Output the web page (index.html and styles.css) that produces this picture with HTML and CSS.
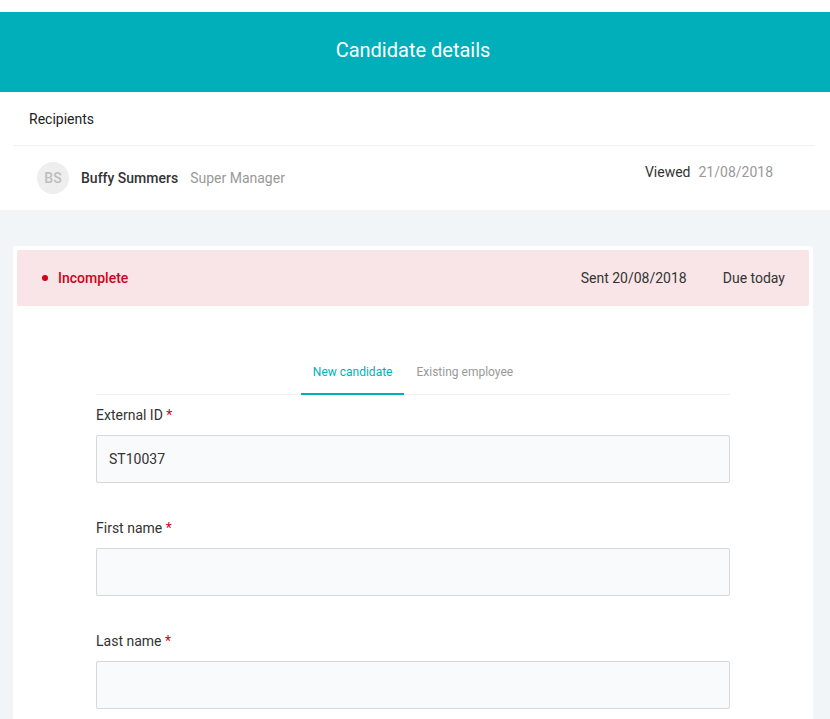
FILE: index.html
```html
<!DOCTYPE html>
<html lang="en">
<head>
    <meta charset="UTF-8">
    <title>Candidate details</title>
    <link rel="stylesheet" href="styles.css">
</head>
<body>
    <div class="top-gap"></div>
    <header class="page-header">
        <h1>Candidate details</h1>
    </header>

    <section class="recipients">
        <div class="recipients-title">Recipients</div>
        <div class="recipient-row">
            <div class="recipient-info">
                <span class="avatar">BS</span>
                <span class="recipient-name">Buffy Summers</span>
                <span class="recipient-role">Super Manager</span>
            </div>
            <div class="recipient-status">
                <span class="status-label">Viewed</span>
                <span class="status-date">21/08/2018</span>
            </div>
        </div>
    </section>

    <main class="main-area">
        <div class="card">
            <div class="status-bar">
                <div class="status-left">
                    <span class="dot"></span>
                    <span>Incomplete</span>
                </div>
                <div class="status-right">
                    <span>Sent 20/08/2018</span>
                    <span>Due today</span>
                </div>
            </div>

            <div class="form-wrap">
                <div class="tabs">
                    <button class="tab active">New candidate</button>
                    <button class="tab">Existing employee</button>
                </div>

                <div class="fields">
                    <div class="field">
                        <label>External ID <span class="req">*</span></label>
                        <input type="text" value="ST10037">
                    </div>
                    <div class="field">
                        <label>First name <span class="req">*</span></label>
                        <input type="text">
                    </div>
                    <div class="field">
                        <label>Last name <span class="req">*</span></label>
                        <input type="text">
                    </div>
                </div>
            </div>
        </div>
    </main>
</body>
</html>
```

FILE: styles.css
```css
body {
    font-family: Roboto, "Liberation Sans", sans-serif;
    background-color: #f2f5f8;
    margin: 0;
    color: #333;
    font-size: 14px;
}

.top-gap {
    height: 12px;
    background-color: white;
}

.page-header {
    background-color: #00afba;
    height: 80px;
    box-sizing: border-box;
    padding: 0 4px 4px 0;
    display: flex;
    align-items: center;
    justify-content: center;
}

.page-header h1 {
    margin: 0;
    color: white;
    font-size: 20px;
    font-weight: 400;
}

.recipients {
    background-color: white;
    padding: 0 15px 0 13px;
}

.recipients-title {
    height: 53px;
    display: flex;
    align-items: center;
    padding-left: 16px;
    color: #222;
}

.recipient-row {
    border-top: 1px solid #eef0f2;
    height: 64px;
    display: flex;
    align-items: center;
    justify-content: space-between;
    padding: 0 42px 0 24px;
}

.recipient-info, .recipient-status {
    display: flex;
    align-items: center;
}

.recipient-status {
    margin-top: -12px;
}

.avatar {
    width: 32px;
    height: 32px;
    border-radius: 50%;
    background-color: #eeeeee;
    color: #bdbdbd;
    font-weight: 500;
    font-size: 14px;
    display: flex;
    align-items: center;
    justify-content: center;
    margin-right: 12px;
}

.recipient-name {
    font-weight: 500;
    color: #333;
    margin-right: 12px;
}

.recipient-role, .status-date {
    color: #999;
}

.status-label {
    color: #333;
    margin-right: 8px;
}

.main-area {
    padding: 36px 17px 0 13px;
}

.card {
    background-color: white;
    border-radius: 4px;
    padding: 4px;
    min-height: 500px;
}

.status-bar {
    background-color: #f9e5e7;
    height: 56px;
    display: flex;
    align-items: center;
    justify-content: space-between;
    padding: 0 24px;
    border-radius: 2px;
}

.status-left {
    display: flex;
    align-items: center;
    color: #d0021b;
    font-weight: 500;
}

.dot {
    width: 6px;
    height: 6px;
    border-radius: 50%;
    background-color: #d0021b;
    margin: 0 10px 0 1px;
}

.status-right {
    display: flex;
    gap: 36px;
    color: #333;
}

.form-wrap {
    padding: 58px 79px 0 79px;
}

.tabs {
    display: flex;
    justify-content: center;
    border-bottom: 1px solid #eef0f2;
}

.tab {
    background: transparent;
    border: none;
    border-bottom: 2px solid transparent;
    font-family: inherit;
    font-size: 12px;
    line-height: 16px;
    padding: 0 12px 13px;
    margin-bottom: -1px;
    color: #999;
    cursor: pointer;
}

.tab.active {
    color: #00afba;
    border-bottom-color: #00afba;
}

.fields {
    display: flex;
    flex-direction: column;
    gap: 35px;
    padding-top: 10px;
}

.field {
    display: flex;
    flex-direction: column;
}

.field label {
    line-height: 20px;
    margin-bottom: 10px;
    color: #333;
}

.req {
    color: #d0021b;
}

.field input {
    height: 48px;
    box-sizing: border-box;
    border: 1px solid #d8d8d8;
    border-radius: 2px;
    background-color: #f9fafb;
    padding: 0 12px;
    font-family: inherit;
    font-size: 14px;
    color: #333;
}
```
